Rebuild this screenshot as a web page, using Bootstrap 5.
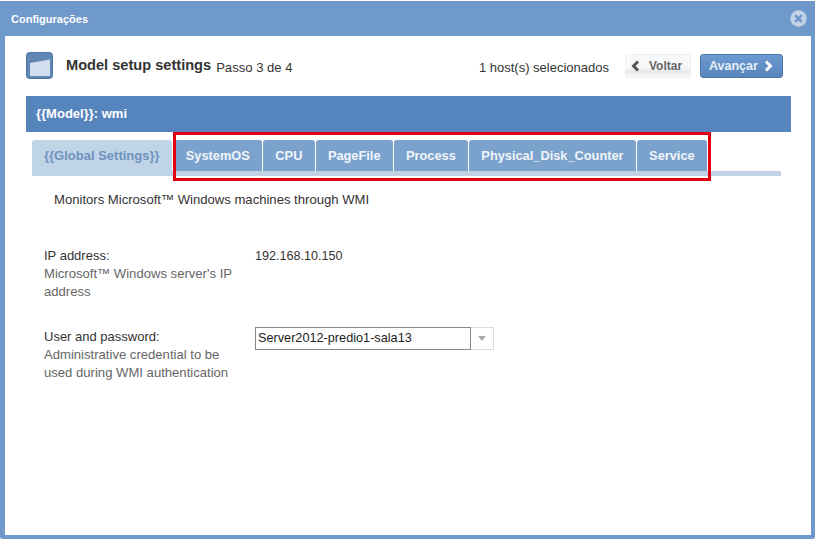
<!DOCTYPE html>
<html lang="pt">
<head>
<meta charset="utf-8">
<title>Configurações</title>
<link href="https://cdn.jsdelivr.net/npm/bootstrap@5.3.0/dist/css/bootstrap.min.css" rel="stylesheet">
<style>
html,body{height:540px;overflow:hidden;background:#fff;}
body{font-family:"Liberation Sans",Arial,sans-serif;font-size:13px;color:#333;line-height:18px;}
.dlg{width:815px;height:538px;margin-top:1px;background:#fff;border:solid #6f99cb;border-width:0 4px 4px 5px;border-radius:3px;position:relative;}
.dlg-head{height:35px;margin:0 -4px 0 -5px;background:#6f99cb;color:#fff;font-weight:700;font-size:11px;padding:0 8px 0 11px;}
.close-ic{width:17px;height:17px;display:block;}
.dlg-body{padding:13px 20px 0 21px;}
.top-row{height:32px;}
.wiz-ic{width:27px;height:27px;display:block;}
.wiz-title{font-size:14.6px;font-weight:700;color:#333;margin-left:13px;}
.wiz-step{font-size:13.1px;margin-left:5px;position:relative;top:3px;}
.hosts{font-size:13px;margin-right:16px;position:relative;top:3px;}
.wbtn{height:24px;border-radius:3px;font-weight:700;display:flex;align-items:center;margin-top:2px;white-space:nowrap;}
.wbtn-back{--bs-btn-font-size:12px;--bs-btn-padding-x:5px;--bs-btn-padding-y:0;--bs-btn-border-radius:3px;background:linear-gradient(#f7f8f9 55%,#e6e9ec 75%,#f7f8f9);border:1px solid #eef0f2;color:#666;margin-right:9px;width:66px;gap:9px;}
.wbtn-next{--bs-btn-font-size:12.5px;--bs-btn-padding-x:8px;--bs-btn-padding-y:0;--bs-btn-border-radius:3px;background:linear-gradient(#6d9ad0,#5785bc);border:1px solid #4c77a9;color:#e6eef7;width:83px;margin-right:8px;gap:6px;}
.model-bar{height:36px;margin-top:15px;background:#5685be;color:#fff;font-weight:700;font-size:13px;padding:0 10px;}
.tabs-wrap{margin:8px 10px 0 6px;border-bottom:5px solid #c2d3e6;}
.wtab{height:31px;padding:0 12.25px;display:flex;align-items:center;background:#7ba2cd;color:#f0f5fa;font-weight:700;font-size:12.8px;border-radius:3px 3px 0 0;margin-right:1px;}
.wtab-on{background:#c0d4e8;color:#6e92bd;font-size:13px;padding:0 12px 5px;margin-right:2px;height:36px;margin-bottom:-5px;}
.wtab-last{margin-right:0;}
.descr{font-size:13.1px;margin:15px 0 0 28px;}
.frow{margin:38px 0 0 18px;}
.frow+.frow{margin-top:27px;}
.flabel{width:211px;padding-right:11px;font-size:13px;}
.flabel small{display:block;font-size:13.1px;color:#666;}
.fval{font-size:12.6px;}
.combo{width:239px;height:23px;border:1px solid #ddd;margin-top:-1px;}
.combo-in{width:216px;height:23px;margin:-1px 0 0 -1px;border:1px solid #888;padding:0 2px;font-size:12.7px;line-height:21px;background:#fff;color:#222;}
.combo-arrow{flex:1;}
.combo-arrow i{display:block;border:4px solid transparent;border-top:5px solid #aaa;border-bottom:0;}
.redbox{position:absolute;left:168px;top:131px;width:538px;height:49px;border:3px solid #e0000f;pointer-events:none;}
</style>
</head>
<body>
<div class="dlg">
  <div class="dlg-head d-flex align-items-center justify-content-between">
    <span>Configurações</span>
    <svg class="close-ic" viewBox="0 0 17 17" aria-hidden="true"><circle cx="8.5" cy="8.5" r="8.2" fill="#c3d3e6"/><path d="M5.2 5.2l6.6 6.6M11.8 5.2l-6.6 6.6" stroke="#6f99cb" stroke-width="2.6"/></svg>
  </div>
  <div class="dlg-body">
    <div class="top-row d-flex align-items-center">
      <svg class="wiz-ic" viewBox="0 0 27 27" aria-hidden="true"><rect x=".5" y=".5" width="26" height="26" rx="3" fill="#5f86b4" stroke="#4f75a3"/><path d="M4 11l20-3.5V24H4z" fill="#d3dfee"/></svg>
      <span class="wiz-title">Model setup settings</span>
      <span class="wiz-step">Passo 3 de 4</span>
      <span class="hosts ms-auto">1 host(s) selecionados</span>
      <button type="button" class="btn wbtn wbtn-back"><svg width="9" height="12" viewBox="0 0 9 12" aria-hidden="true"><path d="M7 1.5L2.5 6 7 10.5" fill="none" stroke="#555" stroke-width="3"/></svg>Voltar</button>
      <button type="button" class="btn wbtn wbtn-next">Avançar<svg width="9" height="12" viewBox="0 0 9 12" aria-hidden="true"><path d="M2 1.5L6.5 6 2 10.5" fill="none" stroke="#fff" stroke-width="3"/></svg></button>
    </div>
    <div class="model-bar d-flex align-items-center">{{Model}}: wmi</div>
    <div class="tabs-wrap d-flex">
      <div class="wtab wtab-on">{{Global Settings}}</div>
      <div class="wtab">SystemOS</div>
      <div class="wtab">CPU</div>
      <div class="wtab">PageFile</div>
      <div class="wtab">Process</div>
      <div class="wtab">Physical_Disk_Counter</div>
      <div class="wtab wtab-last">Service</div>
    </div>
    <div class="descr">Monitors Microsoft™ Windows machines through WMI</div>
    <div class="frow d-flex">
      <div class="flabel">IP address:<small>Microsoft™ Windows server's IP address</small></div>
      <div class="fval">192.168.10.150</div>
    </div>
    <div class="frow d-flex">
      <div class="flabel">User and password:<small>Administrative credential to be used during WMI authentication</small></div>
      <div class="combo d-flex">
        <div class="combo-in">Server2012-predio1-sala13</div>
        <div class="combo-arrow d-flex align-items-center justify-content-center"><i></i></div>
      </div>
    </div>
  </div>
  <div class="redbox"></div>
</div>
</body>
</html>
